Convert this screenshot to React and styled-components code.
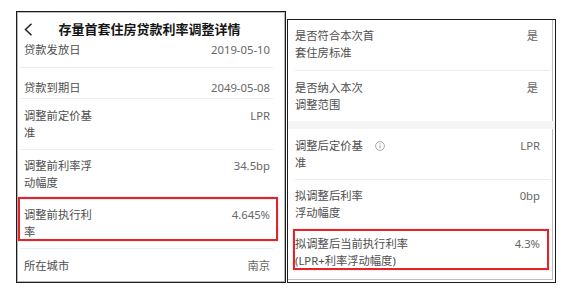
import React from "react";
import styled, { createGlobalStyle } from "styled-components";

const Global = createGlobalStyle`
  html, body { margin: 0; padding: 0; background: #fff; }
  body { font-family: "Noto Sans", "Noto Sans CJK SC", sans-serif; }
  * { box-sizing: border-box; }
`;

const Stage = styled.div`
  display: flex;
  align-items: flex-end;
  gap: 1px;
  width: 569px;
  height: 283px;
  padding-left: 16px;
`;

const Panel = styled.div`
  position: relative;
  width: ${(p) => p.$w}px;
  height: ${(p) => p.$h}px;
  border: 1px solid #1c1c1c;
  background: #fff;
  overflow: hidden;
  display: flex;
  flex-direction: column;
  box-shadow: ${(p) => p.$shadow};
`;

const Header = styled.div`
  flex: none;
  display: grid;
  grid-template-columns: 30px 1fr 40px;
  align-items: center;
  height: 29px;
  padding: 8px 0 3px 7px;
`;

const Back = styled.svg`
  display: block;
  width: 9px;
  height: 13px;
`;

const Title = styled.div`
  text-align: center;
  font-size: 13px;
  line-height: 18px;
  font-weight: 700;
  color: #151515;
  white-space: nowrap;
`;

const Row = styled.div`
  position: relative;
  flex: none;
  display: flex;
  justify-content: space-between;
  align-items: flex-start;
  margin: ${(p) => p.$margin};
  padding: ${(p) => p.$pad};
  border-bottom: ${(p) => (p.$sep ? "1px solid #ececec" : "none")};
`;

const Label = styled.div`
  display: flex;
  flex-direction: column;
  color: #4e4e4e;
  font-size: 11.3px;
  line-height: 17px;
`;

const Line = styled.span`
  display: flex;
  align-items: center;
  white-space: nowrap;
`;

const Value = styled.div`
  color: #676767;
  font-size: 11.3px;
  line-height: 17px;
  white-space: nowrap;
`;

const Band = styled.div`
  flex: none;
  height: 8px;
  background: #f5f5f5;
`;

const Info = styled.svg`
  display: block;
  width: 10px;
  height: 10px;
  margin-left: 12px;
`;

const Highlight = styled.div`
  position: absolute;
  left: ${(p) => p.$left}px;
  top: ${(p) => p.$top}px;
  width: ${(p) => p.$w}px;
  height: ${(p) => p.$h}px;
  border: 2px solid #e3242b;
  box-shadow: 0 0 1px rgba(227, 36, 43, 0.5);
  pointer-events: none;
`;

const leftRows = [
  { label: ["贷款发放日"], value: "2019-05-10", pad: "0 3px 9px 4px", sep: true },
  { label: ["贷款到期日"], value: "2049-05-08", pad: "11px 3px 2px 4px", sep: true },
  { label: ["调整前定价基", "准"], value: "LPR", pad: "8px 3px 8px 4px", sep: true },
  { label: ["调整前利率浮", "动幅度"], value: "34.5bp", pad: "7px 3px 8px 4px", sep: true },
  {
    label: ["调整前执行利", "率"],
    value: "4.645%",
    pad: "6px 3px 8px 4px",
    sep: true,
    hl: { left: -2, top: -3, w: 260, h: 44 },
  },
  { label: ["所在城市"], value: "南京", pad: "8px 3px 8px 4px", sep: false },
];

const rightTop = [
  { label: ["是否符合本次首", "套住房标准"], value: "是", pad: "7px 12px 9px 0", sep: true },
  { label: ["是否纳入本次", "调整范围"], value: "是", pad: "8px 12px 8px 0", sep: false },
];

const rightBottom = [
  { label: ["调整后定价基", "准"], value: "LPR", pad: "8px 10px 8px 0", sep: true, info: true },
  { label: ["拟调整后利率", "浮动幅度"], value: "0bp", pad: "7px 10px 8px 0", sep: true },
  {
    label: ["拟调整后当前执行利率", "(LPR+利率浮动幅度)"],
    value: "4.3%",
    pad: "5px 10px 8px 0",
    sep: false,
    hl: { left: -2, top: -1, w: 256, h: 41 },
  },
];

function InfoIcon() {
  return (
    <Info viewBox="0 0 10 10">
      <circle cx="5" cy="5" r="4.4" fill="none" stroke="#a0a0a0" strokeWidth="0.9" />
      <line x1="5" y1="4.3" x2="5" y2="7.4" stroke="#a0a0a0" strokeWidth="1" />
      <circle cx="5" cy="2.9" r="0.6" fill="#a0a0a0" />
    </Info>
  );
}

function DataRow({ row, margin }) {
  return (
    <Row $margin={margin} $pad={row.pad} $sep={row.sep}>
      <Label>
        {row.label.map((t, i) => (
          <Line key={i}>
            {t}
            {row.info && i === 0 ? <InfoIcon /> : null}
          </Line>
        ))}
      </Label>
      <Value>{row.value}</Value>
      {row.hl ? (
        <Highlight $left={row.hl.left} $top={row.hl.top} $w={row.hl.w} $h={row.hl.h} />
      ) : null}
    </Row>
  );
}

export default function App() {
  return (
    <>
      <Global />
      <Stage>
        <Panel $w={270} $h={272} $shadow="inset 0 0 0 1px #b8b8b8">
          <Header>
            <Back viewBox="0 0 9 13">
              <polyline points="7.5,0.8 1.5,6.5 7.5,12.2" fill="none" stroke="#222" strokeWidth="1.5" />
            </Back>
            <Title>存量首套住房贷款利率调整详情</Title>
            <span />
          </Header>
          {leftRows.map((r, i) => (
            <DataRow key={i} row={r} margin="0 12px 0 3px" />
          ))}
        </Panel>
        <Panel
          $w={269}
          $h={264}
          $shadow="inset -2px -2px 0 #fff, inset -3px -3px 0 #bdbdbd"
        >
          {rightTop.map((r, i) => (
            <DataRow key={i} row={r} margin="0 5px 0 7px" />
          ))}
          <Band />
          {rightBottom.map((r, i) => (
            <DataRow key={i} row={r} margin="0 5px 0 7px" />
          ))}
        </Panel>
      </Stage>
    </>
  );
}
